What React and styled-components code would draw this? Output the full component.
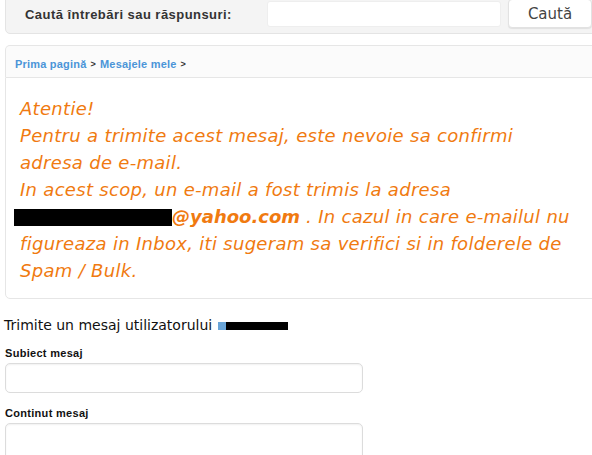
import React from "react";
import styled, { createGlobalStyle } from "styled-components";

const Global = createGlobalStyle`
  body {
    margin: 0;
    background: #fff;
    font-family: "DejaVu Sans", Verdana, sans-serif;
    overflow: hidden;
  }
`;

const Page = styled.div`
  width: 592px;
  display: flex;
  flex-direction: column;
`;

const Panel = styled.div`
  margin-left: 5px;
  margin-right: -6px;
  border: 1px solid #e6e6e6;
  border-radius: 5px;
  background: ${props => props.bg || "#fff"};
`;

const SearchBar = styled(Panel)`
  margin-top: -6px;
  height: 40px;
  display: flex;
  align-items: flex-end;
  padding: 0 0 6px 19px;
  box-sizing: border-box;
  border-color: #e4e4e4;
`;

const SearchLabel = styled.span`
  font-family: "Liberation Sans", Arial, sans-serif;
  font-weight: bold;
  font-size: 13px;
  color: #333;
  letter-spacing: 0.45px;
  width: 242px;
  line-height: 24px;
  white-space: nowrap;
`;

const SearchInput = styled.div`
  width: 232px;
  height: 24px;
  background: #fff;
  border: 1px solid #eeeeee;
  border-radius: 3px;
`;

const SearchButton = styled.div`
  margin-left: 7px;
  width: 82px;
  height: 27px;
  margin-bottom: -1px;
  background: #fff;
  border: 1px solid #e2e2e2;
  border-radius: 4px;
  box-shadow: 0 1px 1px rgba(0, 0, 0, 0.08);
  display: flex;
  align-items: center;
  justify-content: center;
  font-size: 15px;
  color: #444;
`;

const Crumbs = styled(Panel)`
  margin-top: 11px;
  height: 32px;
  box-sizing: border-box;
  display: flex;
  align-items: center;
  padding: 5px 0 0 9px;
  background: #fbfbfb;
  border-bottom: none;
  border-radius: 5px 5px 0 0;
  font-family: "Liberation Sans", Arial, sans-serif;
  font-size: 11px;
  font-weight: bold;
  letter-spacing: 0.2px;
`;

const Crumb = styled.span`
  color: #4b95d8;
`;

const Sep = styled.span`
  color: #333;
  font-size: 9px;
  margin: 0 4px;
`;

const Notice = styled(Panel)`
  border-radius: 0 0 5px 5px;
  padding: 17px 0 0 14px;
  font-family: "DejaVu Sans", sans-serif;
  font-style: italic;
  font-size: 18px;
  letter-spacing: 0.3px;
  line-height: 27px;
  color: #f07a10;
  height: 222px;
  box-sizing: border-box;
  white-space: nowrap;
`;

const Redacted = styled.span`
  display: inline-block;
  width: ${props => props.w}px;
  height: ${props => props.h}px;
  background: #000;
  margin-left: -6px;
  vertical-align: ${props => props.v || 0}px;
`;

const Email = styled.b`
  font-weight: bold;
  letter-spacing: 0;
`;

const Form = styled.div`
  padding: 18px 0 0 4px;
  display: flex;
  flex-direction: column;
`;

const Title = styled.div`
  font-size: 14px;
  color: #111;
  display: flex;
  align-items: center;
`;

const User = styled.span`
  display: inline-block;
  width: 70px;
  height: 8px;
  background: linear-gradient(to right, #6aa5d8 0 8px, #000 8px);
  margin: 2px 0 0 6px;
`;

const Label = styled.div`
  font-family: "Liberation Sans", Arial, sans-serif;
  font-size: 11px;
  font-weight: bold;
  letter-spacing: 0.3px;
  color: #111;
  margin: 14px 0 0 1px;
`;

const Field = styled.div`
  margin: 4px 0 0 1px;
  width: 358px;
  height: ${props => props.h}px;
  box-sizing: border-box;
  border: 1px solid #dcdcdc;
  border-radius: 5px;
  box-shadow: inset 0 1px 2px rgba(0, 0, 0, 0.06);
`;

export default () => {
  return (
    <Page>
      <Global />
      <SearchBar bg="#f4f4f4">
        <SearchLabel>Caută întrebări sau răspunsuri:</SearchLabel>
        <SearchInput />
        <SearchButton>Caută</SearchButton>
      </SearchBar>
      <Crumbs>
        <Crumb>Prima pagină</Crumb>
        <Sep>&gt;</Sep>
        <Crumb>Mesajele mele</Crumb>
        <Sep>&gt;</Sep>
      </Crumbs>
      <Notice>
        Atentie!
        <br />
        Pentru a trimite acest mesaj, este nevoie sa confirmi
        <br />
        adresa de e-mail.
        <br />
        In acest scop, un e-mail a fost trimis la adresa
        <br />
        <Redacted w={158} h={17} v={-3} />
        <Email>@yahoo.com</Email> . In cazul in care e-mailul nu
        <br />
        figureaza in Inbox, iti sugeram sa verifici si in folderele de
        <br />
        Spam / Bulk.
      </Notice>
      <Form>
        <Title>
          Trimite un mesaj utilizatorului
          <User />
        </Title>
        <Label>Subiect mesaj</Label>
        <Field h={30} />
        <Label>Continut mesaj</Label>
        <Field h={60} />
      </Form>
    </Page>
  );
};
